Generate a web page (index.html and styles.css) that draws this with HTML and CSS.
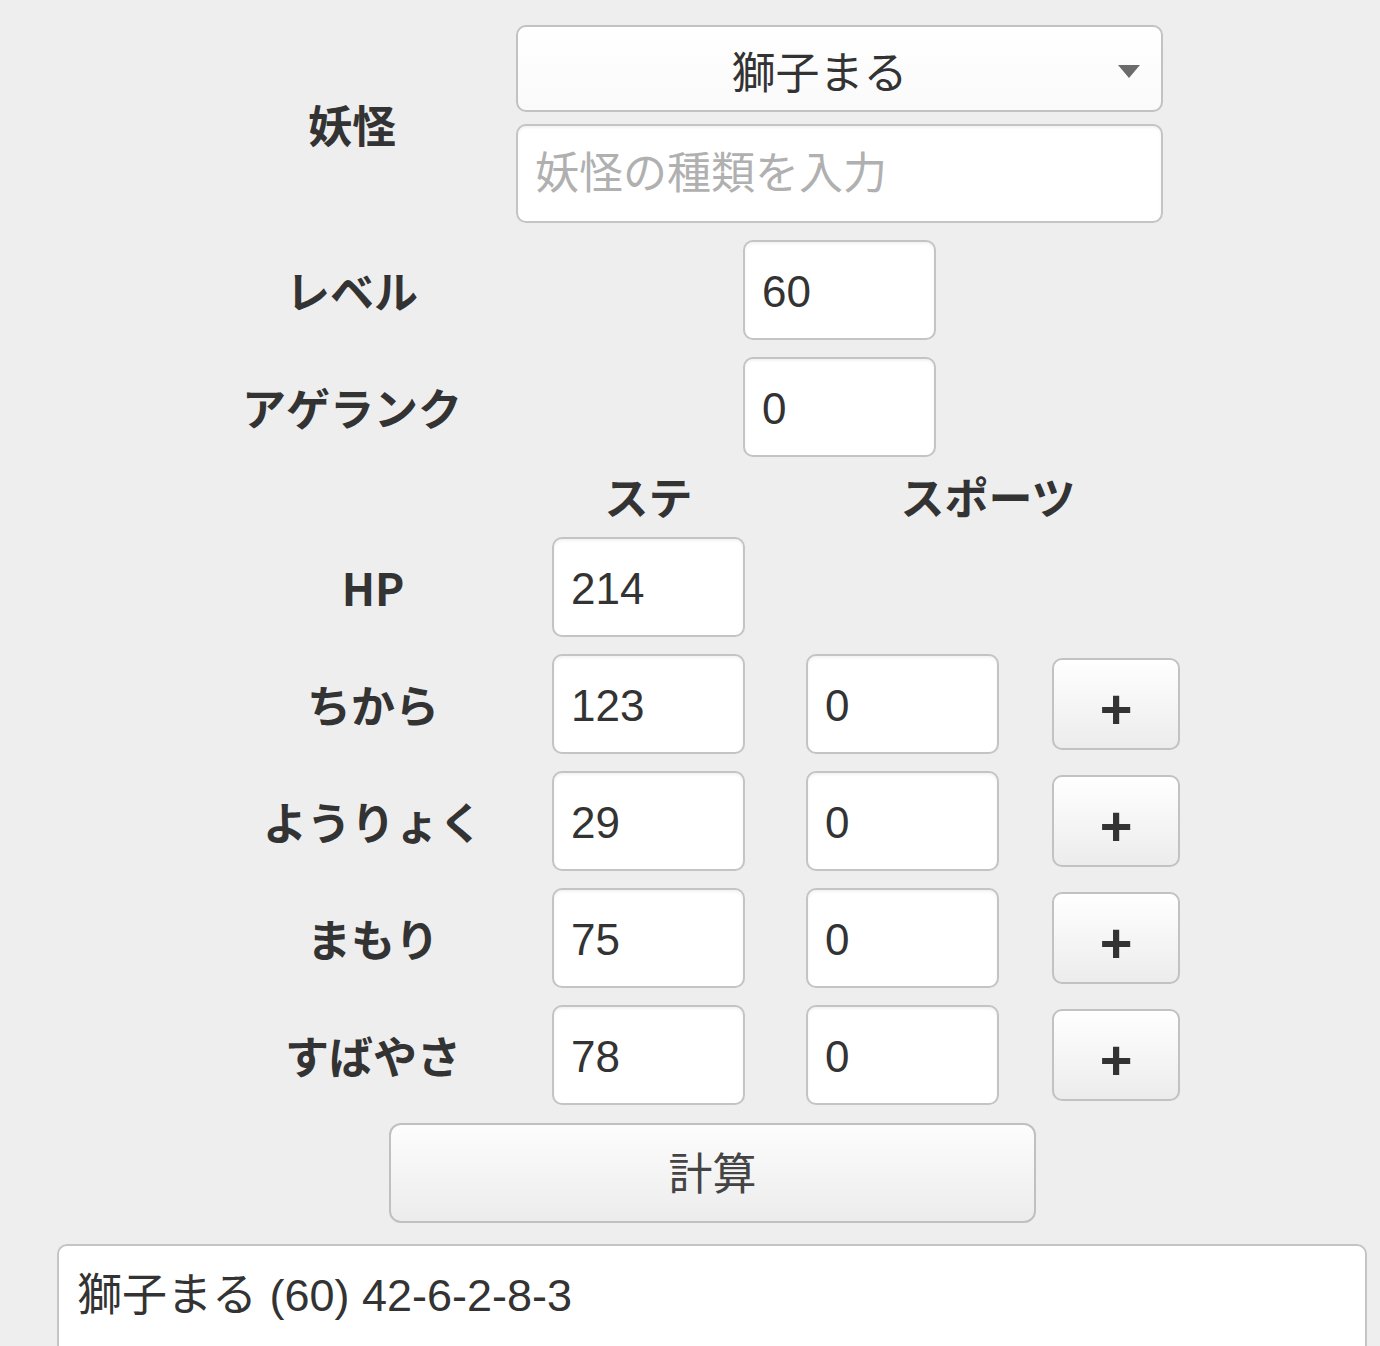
FILE: index.html
```
<!DOCTYPE html>
<html lang="ja">
<head>
<meta charset="utf-8">
<title>妖怪ステータス計算</title>
<link rel="stylesheet" href="styles.css">
</head>
<body>
<main class="page">
  <section class="top">
    <div class="trow">
      <div class="lbl">妖怪</div>
      <div class="stack">
        <div class="select">
          <select class="sel"><option>獅子まる</option></select>
          <svg class="caret" width="24" height="16" viewBox="0 0 24 16"><path d="M1 2 L23 2 L12 15 Z" fill="#6b6b6b"/></svg>
        </div>
        <input class="field wide" type="text" placeholder="妖怪の種類を入力">
      </div>
    </div>
    <div class="trow">
      <div class="lbl">レベル</div>
      <input class="field small center" type="text" value="60">
    </div>
    <div class="trow">
      <div class="lbl">アゲランク</div>
      <input class="field small center" type="text" value="0">
    </div>
  </section>

  <section class="stats">
    <div class="head"></div>
    <div class="head ste">ステ</div>
    <div class="head sports">スポーツ</div>

    <div class="lbl2">HP</div>
    <input class="field small" type="text" value="214">
    <div></div><div></div>

    <div class="lbl2">ちから</div>
    <input class="field small" type="text" value="123">
    <input class="field small" type="text" value="0">
    <button class="plus">+</button>

    <div class="lbl2">ようりょく</div>
    <input class="field small" type="text" value="29">
    <input class="field small" type="text" value="0">
    <button class="plus">+</button>

    <div class="lbl2">まもり</div>
    <input class="field small" type="text" value="75">
    <input class="field small" type="text" value="0">
    <button class="plus">+</button>

    <div class="lbl2">すばやさ</div>
    <input class="field small" type="text" value="78">
    <input class="field small" type="text" value="0">
    <button class="plus">+</button>
  </section>

  <div class="calc-wrap"><button class="calc">計算</button></div>

  <textarea class="result">獅子まる (60) 42-6-2-8-3</textarea>
</main>
</body>
</html>
```

FILE: styles.css
```
html, body {
  margin: 0;
  padding: 0;
  height: 1346px;
  overflow: hidden;
  background: #eeeeee;
}
.page {
  font-family: "Liberation Sans", "Noto Sans CJK JP", sans-serif;
  color: #333;
  font-size: 44px;
  padding-top: 25px;
}
.top {
  margin-left: 240px;
  display: flex;
  flex-direction: column;
  gap: 17px;
}
.trow {
  display: grid;
  grid-template-columns: 224px 647px;
  column-gap: 52px;
  align-items: center;
}
.lbl, .lbl2, .head {
  font-family: "Noto Sans CJK JP", sans-serif;
  font-weight: 700;
  font-size: 44px;
  color: #333;
  text-align: center;
  line-height: 1;
}
.stack {
  display: flex;
  flex-direction: column;
  gap: 12px;
}
.select {
  position: relative;
  height: 87px;
}
.sel {
  appearance: none;
  -webkit-appearance: none;
  width: 100%;
  height: 87px;
  box-sizing: border-box;
  border: 2px solid #c2c2c2;
  border-radius: 10px;
  background: linear-gradient(#ffffff, #fafafa);
  font-family: "Liberation Sans", "Noto Sans CJK JP", sans-serif;
  font-size: 44px;
  color: #333;
  text-align: center;
  text-align-last: center;
  padding: 10px 40px 0 0;
  margin: 0;
}
.caret {
  position: absolute;
  right: 22px;
  top: 38px;
}
.field {
  box-sizing: border-box;
  border: 2px solid #c4c4c4;
  border-radius: 10px;
  background: #fff;
  box-shadow: inset 0 2px 3px rgba(0,0,0,0.05);
  font-family: "Liberation Sans", "Noto Sans CJK JP", sans-serif;
  font-size: 44px;
  color: #333;
  padding: 4px 0 0 17px;
  margin: 0;
  outline: none;
}
.field::placeholder {
  color: #b0b0b0;
}
.wide {
  width: 647px;
  height: 99px;
  padding-top: 0;
}
.small {
  width: 193px;
  height: 100px;
}
.center {
  justify-self: center;
}
.stats {
  margin-top: 17px;
  margin-left: 260px;
  display: grid;
  grid-template-columns: 292px 254px 246px 128px;
  grid-auto-rows: 100px;
  grid-template-rows: 46px;
  row-gap: 17px;
  align-items: center;
}
.head {
  align-self: center;
  margin-bottom: 2px;
}
.head.ste {
  width: 193px;
}
.head.sports {
  grid-column: 3 / 5;
  padding-right: 10px;
}
.lbl2 {
  width: 226px;
}
.plus {
  width: 128px;
  height: 92px;
  box-sizing: border-box;
  border: 2px solid #c2c2c2;
  border-radius: 10px;
  background: linear-gradient(#ffffff, #ececec);
  font-family: "Liberation Sans", sans-serif;
  font-weight: 700;
  font-size: 56px;
  line-height: 1;
  color: #333;
  padding: 10px 0 0 0;
  margin: 0;
}
.calc-wrap {
  margin-top: 18px;
  margin-left: 389px;
}
.calc {
  width: 647px;
  height: 100px;
  box-sizing: border-box;
  border: 2px solid #c0c0c0;
  border-radius: 12px;
  background: linear-gradient(#fdfdfd, #ececec);
  font-family: "Liberation Sans", "Noto Sans CJK JP", sans-serif;
  font-size: 44px;
  color: #444;
  padding: 0 0 4px 0;
  margin: 0;
}
.result {
  display: block;
  margin: 21px 0 0 57px;
  width: 1310px;
  height: 140px;
  box-sizing: border-box;
  border: 2px solid #c4c4c4;
  border-radius: 10px;
  background: #fff;
  font-family: "Liberation Sans", "Noto Sans CJK JP", sans-serif;
  font-size: 45px;
  line-height: 52px;
  color: #333;
  padding: 24px 18px;
  resize: none;
  outline: none;
  overflow: hidden;
}
```
